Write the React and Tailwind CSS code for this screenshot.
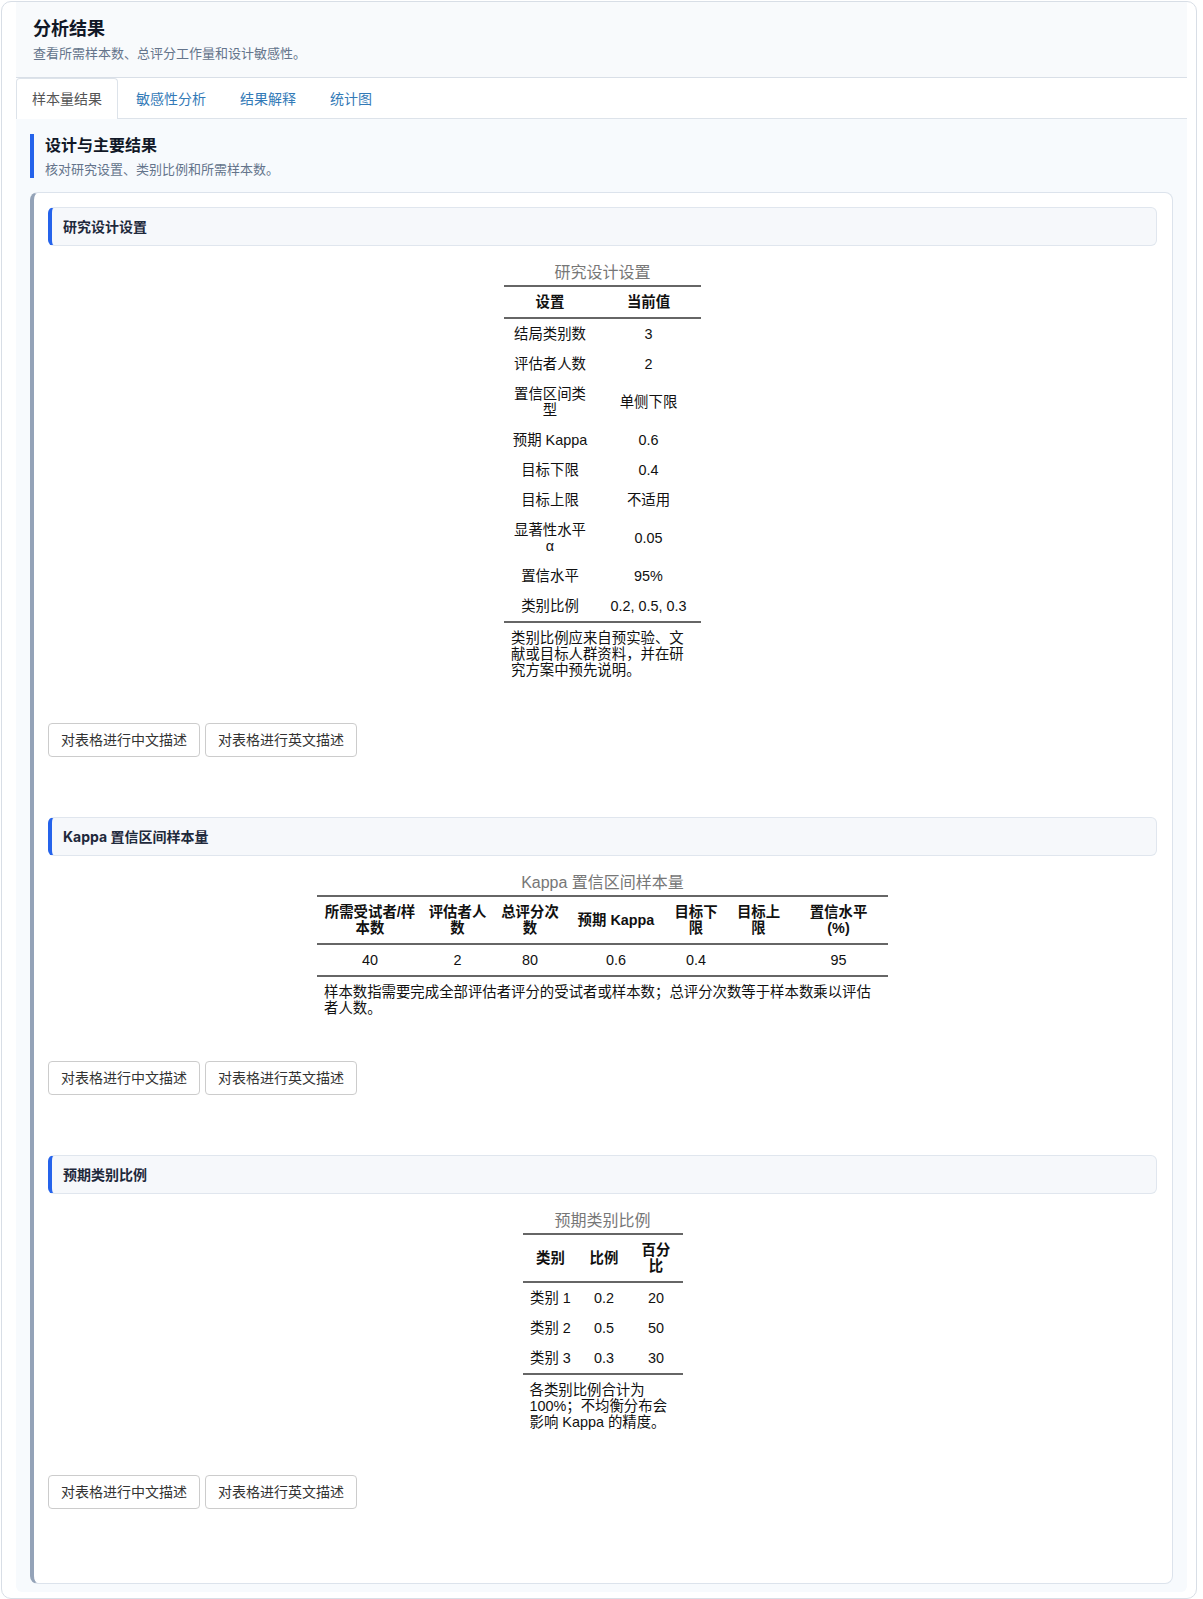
import React from "react";

const ui = { fontFamily: '"Inter", "Noto Sans CJK SC", sans-serif' };
const tbl = { fontFamily: '"Liberation Sans", "Noto Sans CJK SC", sans-serif' };

/* ---------- data ---------- */
const designRows = [
  [["结局类别数"], "3"],
  [["评估者人数"], "2"],
  [["置信区间类", "型"], "单侧下限"],
  [["预期 Kappa"], "0.6"],
  [["目标下限"], "0.4"],
  [["目标上限"], "不适用"],
  [["显著性水平", "α"], "0.05"],
  [["置信水平"], "95%"],
  [["类别比例"], "0.2, 0.5, 0.3"],
];

const kappaHead = [
  ["所需受试者/样", "本数"],
  ["评估者人", "数"],
  ["总评分次", "数"],
  ["预期 Kappa"],
  ["目标下", "限"],
  ["目标上", "限"],
  ["置信水平", "(%)"],
];

const propRows = [
  ["类别 1", "0.2", "20"],
  ["类别 2", "0.5", "50"],
  ["类别 3", "0.3", "30"],
];

/* ---------- bits ---------- */
const Lines = ({ lines }) =>
  lines.map((l, i) => (
    <React.Fragment key={i}>
      {i > 0 && <br />}
      {l}
    </React.Fragment>
  ));

const Cell = ({ head, children }) => {
  const Tag = head ? "th" : "td";
  return (
    <Tag
      className={`px-[5px] py-[7px] leading-[16px] text-center align-middle whitespace-nowrap ${
        head ? "font-bold" : "font-normal"
      }`}
    >
      {children}
    </Tag>
  );
};

const Table = ({ caption, width, cols, head, rows, note }) => (
  <div className="mx-auto w-fit mt-[17px] text-[#111]" style={tbl}>
    <div className="text-center text-[16px] leading-[20px] text-[#777] mb-[2px]">{caption}</div>
    <table className={`table-fixed border-collapse text-[14.4px] ${width}`}>
      <colgroup>
        {cols.map((c, i) => (
          <col key={i} className={c} />
        ))}
      </colgroup>
      <thead>
        <tr className="border-t-2 border-b-2 border-[#666]">
          {head.map((h, i) => (
            <Cell head key={i}>
              <Lines lines={h} />
            </Cell>
          ))}
        </tr>
      </thead>
      <tbody>
        {rows.map((r, i) => (
          <tr key={i} className={i === rows.length - 1 ? "border-b-2 border-[#666]" : ""}>
            {r.map((c, j) => (
              <Cell key={j}>{Array.isArray(c) ? <Lines lines={c} /> : c}</Cell>
            ))}
          </tr>
        ))}
      </tbody>
      <tfoot>
        <tr>
          <td
            colSpan={cols.length}
            className="px-[7px] pt-[7px] pb-[6px] leading-[16px] text-left whitespace-nowrap"
          >
            <Lines lines={note} />
          </td>
        </tr>
      </tfoot>
    </table>
  </div>
);

const Block = ({ title, children }) => (
  <div className="mb-[60px]">
    <div
      className="h-[39px] flex items-center pl-[11px] rounded-[6px] border border-[#e0e6ee] border-l-4 border-l-[#2563eb] bg-[#f6f8fb] text-[14px] font-bold text-[#1e293b]"
      style={ui}
    >
      {title}
    </div>
    {children}
    <div className="flex gap-[5px] mt-[39px]" style={tbl}>
      {["对表格进行中文描述", "对表格进行英文描述"].map((t) => (
        <button
          key={t}
          className="px-[12px] py-[6px] text-[14px] leading-[20px] text-[#333] bg-white border border-[#ccc] rounded-[4px]"
        >
          {t}
        </button>
      ))}
    </div>
  </div>
);

const tabs = ["样本量结果", "敏感性分析", "结果解释", "统计图"];

/* ---------- App ---------- */
export default function App() {
  return (
    <div className="pl-[1px] pt-[1px] bg-white">
      <div className="w-[1196px] h-[1598px] overflow-hidden border border-[#d8dee6] rounded-[10px] bg-white pl-[14px] pr-[9px]" style={ui}>
        {/* header */}
        <div className="h-[76px] bg-[#f8fafc] border-b border-[#d9dfe7] pl-[17px] pt-[15px]">
          <div className="text-[18px] leading-[24px] font-semibold text-[#111827]">分析结果</div>
          <div className="mt-[3px] text-[13px] leading-[18px] text-[#64748b]">
            查看所需样本数、总评分工作量和设计敏感性。
          </div>
        </div>

        {/* tabs */}
        <ul className="flex border-b border-[#dde3ea]">
          {tabs.map((t, i) => (
            <li key={t} className="mr-[2px] -mb-px">
              <span
                className={`block h-[41px] px-[15px] pt-[10px] text-[14px] leading-[20px] border border-b-0 rounded-t-[4px] ${
                  i === 0
                    ? "bg-white text-[#555] border-[#dde3ea]"
                    : "text-[#337ab7] border-transparent"
                }`}
              >
                {t}
              </span>
            </li>
          ))}
        </ul>

        {/* panel */}
        <div className="bg-[#f7fafd] rounded-b-[6px] px-[14px] pt-[15px] pb-[8px]">
          <div className="border-l-4 border-[#2563eb] pl-[11px] h-[44px]">
            <div className="text-[16px] leading-[22px] font-bold text-[#111827]">设计与主要结果</div>
            <div className="mt-[4px] text-[13px] leading-[18px] text-[#64748b]">
              核对研究设置、类别比例和所需样本数。
            </div>
          </div>

          <div className="mt-[14px] bg-white rounded-[8px] border border-[#dce3ec] border-l-4 border-l-[#94a3b8] pl-[14px] pr-[15px] pt-[14px] pb-[14px]">
            <Block title="研究设计设置">
              <Table
                caption="研究设计设置"
                width="w-[197px]"
                cols={["w-[92px]", "w-[105px]"]}
                head={[["设置"], ["当前值"]]}
                rows={designRows}
                note={["类别比例应来自预实验、文", "献或目标人群资料，并在研", "究方案中预先说明。"]}
              />
            </Block>

            <Block title="Kappa 置信区间样本量">
              <Table
                caption="Kappa 置信区间样本量"
                width="w-[571px]"
                cols={["w-[106px]", "w-[69px]", "w-[76px]", "w-[96px]", "w-[64px]", "w-[61px]", "w-[99px]"]}
                head={kappaHead}
                rows={[["40", "2", "80", "0.6", "0.4", "", "95"]]}
                note={[
                  "样本数指需要完成全部评估者评分的受试者或样本数；总评分次数等于样本数乘以评估",
                  "者人数。",
                ]}
              />
            </Block>

            <Block title="预期类别比例">
              <Table
                caption="预期类别比例"
                width="w-[160px]"
                cols={["w-[56px]", "w-[51px]", "w-[53px]"]}
                head={[["类别"], ["比例"], ["百分", "比"]]}
                rows={propRows}
                note={["各类别比例合计为", "100%；不均衡分布会", "影响 Kappa 的精度。"]}
              />
            </Block>
          </div>
        </div>
      </div>
    </div>
  );
}
